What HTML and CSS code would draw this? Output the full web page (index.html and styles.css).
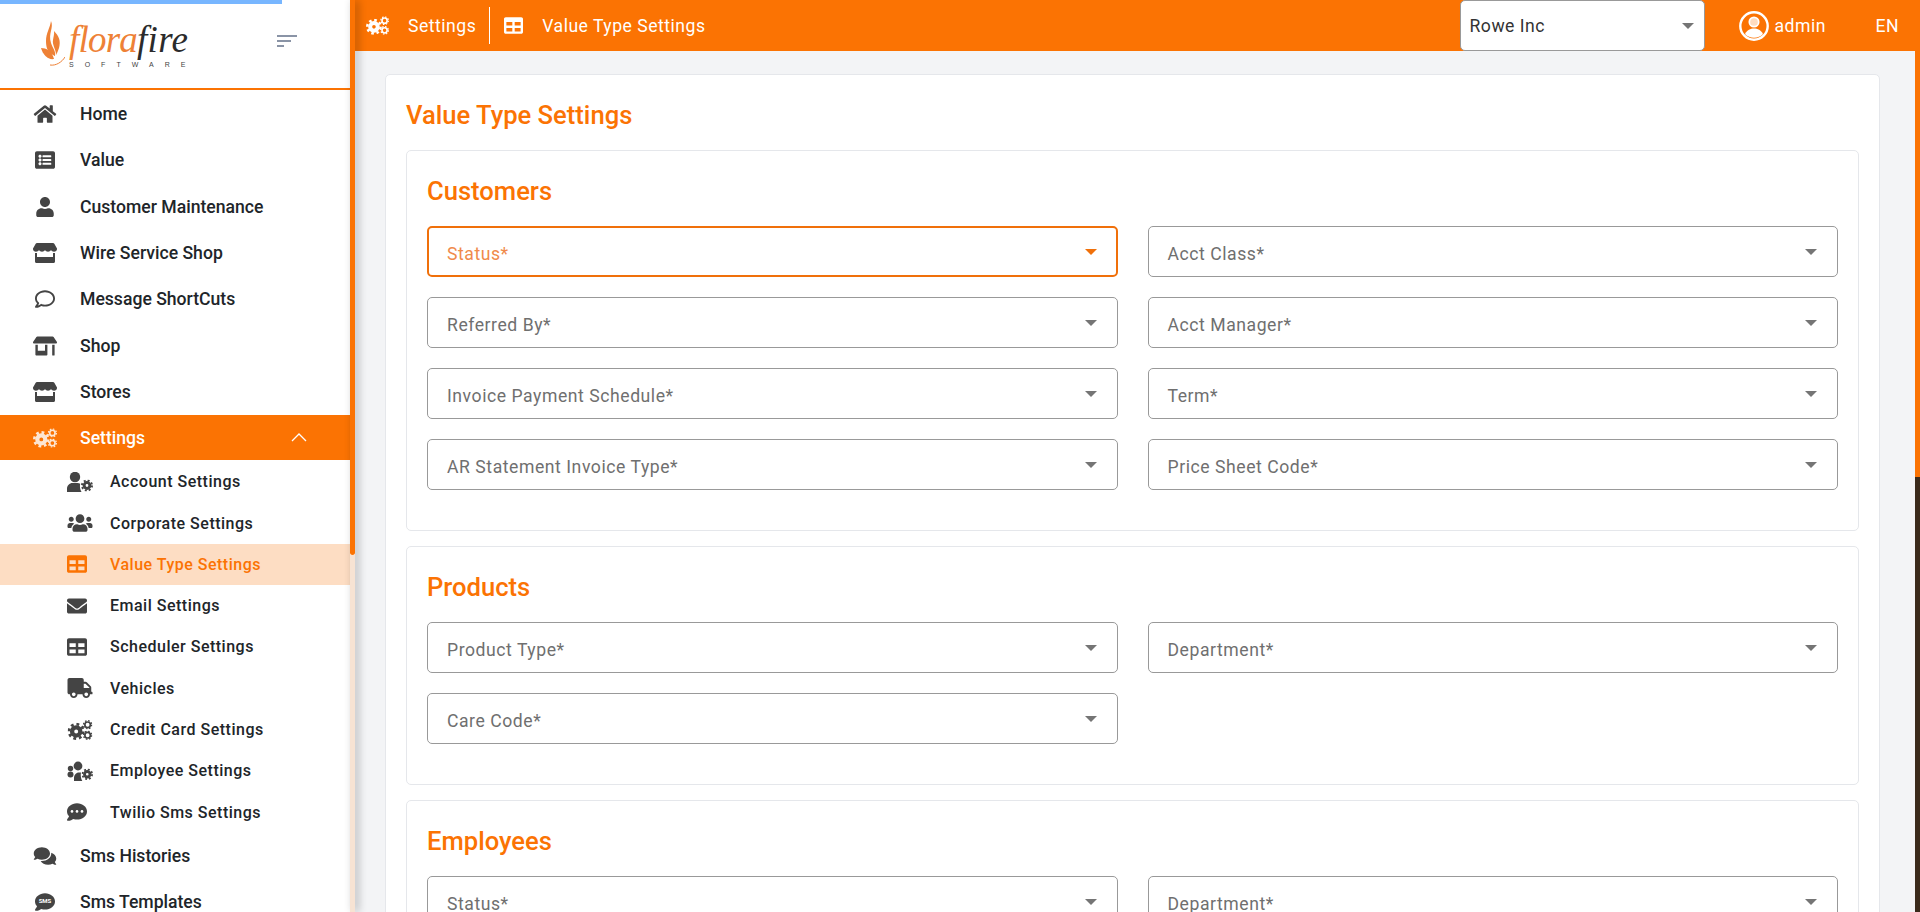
FILE: index.html
```html
<!DOCTYPE html>
<html lang="en">
<head>
    <meta charset="UTF-8">
    <title>Value Type Settings</title>
    <link rel="stylesheet" href="styles.css">
</head>
<body>
    <svg class="defs" width="0" height="0">
        <symbol id="gear" viewBox="0 0 20 20">
            <circle cx="10" cy="10" r="4.800" fill="none" stroke="currentColor" stroke-width="5"/>
            <circle cx="10" cy="10" r="8.400" fill="none" stroke="currentColor" stroke-width="3.200" stroke-dasharray="3.300 3.300"/>
        </symbol>
        <symbol id="gear-small" viewBox="0 0 20 20">
            <circle cx="10" cy="10" r="5.800" fill="none" stroke="currentColor" stroke-width="3.600"/>
            <circle cx="10" cy="10" r="8.600" fill="none" stroke="currentColor" stroke-width="2.800" stroke-dasharray="3.380 3.380"/>
        </symbol>
        <symbol id="i-cogs" viewBox="0 0 26 21">
            <use href="#gear" x="0" y="3" width="18" height="18"/>
            <use href="#gear-small" x="16" y="0" width="10" height="10"/>
            <use href="#gear-small" x="16" y="11" width="10" height="10"/>
        </symbol>
        <symbol id="i-home" viewBox="0 0 576 512">
            <path fill="currentColor" d="M280.37 148.26L96 300.11V464a16 16 0 0 0 16 16l112.06-.29a16 16 0 0 0 15.92-16V368a16 16 0 0 1 16-16h64a16 16 0 0 1 16 16v95.64a16 16 0 0 0 16 16.05L464 480a16 16 0 0 0 16-16V300L295.67 148.26a12.19 12.19 0 0 0-15.3 0zM571.6 251.47L488 182.56V44.05a12 12 0 0 0-12-12h-56a12 12 0 0 0-12 12v72.61L318.47 43a48 48 0 0 0-61 0L4.34 251.47a12 12 0 0 0-1.6 16.9l25.5 31A12 12 0 0 0 45.15 301l235.22-193.74a12.19 12.19 0 0 1 15.3 0L530.9 301a12 12 0 0 0 16.9-1.6l25.5-31a12 12 0 0 0-1.7-16.93z"/>
        </symbol>
        <symbol id="i-list" viewBox="0 0 512 512">
            <path fill="currentColor" d="M464 480H48c-26.51 0-48-21.49-48-48V80c0-26.51 21.49-48 48-48h416c26.51 0 48 21.49 48 48v352c0 26.51-21.49 48-48 48zM128 120c-22.091 0-40 17.909-40 40s17.909 40 40 40 40-17.909 40-40-17.909-40-40-40zm0 96c-22.091 0-40 17.909-40 40s17.909 40 40 40 40-17.909 40-40-17.909-40-40-40zm0 96c-22.091 0-40 17.909-40 40s17.909 40 40 40 40-17.909 40-40-17.909-40-40-40zm288-136v-32c0-6.627-5.373-12-12-12H204c-6.627 0-12 5.373-12 12v32c0 6.627 5.373 12 12 12h200c6.627 0 12-5.373 12-12zm0 96v-32c0-6.627-5.373-12-12-12H204c-6.627 0-12 5.373-12 12v32c0 6.627 5.373 12 12 12h200c6.627 0 12-5.373 12-12zm0 96v-32c0-6.627-5.373-12-12-12H204c-6.627 0-12 5.373-12 12v32c0 6.627 5.373 12 12 12h200c6.627 0 12-5.373 12-12z"/>
        </symbol>
        <symbol id="i-user" viewBox="0 0 448 512">
            <path fill="currentColor" d="M224 256c70.7 0 128-57.3 128-128S294.7 0 224 0 96 57.3 96 128s57.3 128 128 128zm89.6 32h-16.7c-22.2 10.2-46.9 16-72.9 16s-50.6-5.8-72.9-16h-16.7C60.2 288 0 348.2 0 422.4V464c0 26.5 21.5 48 48 48h352c26.5 0 48-21.5 48-48v-41.6c0-74.2-60.2-134.4-134.4-134.4z"/>
        </symbol>
        <symbol id="i-store" viewBox="0 0 24 20">
            <path fill="currentColor" d="M4 0h16c.6 0 1 .3 1.300.8L24 5.400c.2 1.800-1 3.300-3 3.300-1.300 0-2.400-.6-3-1.600-.6 1-1.700 1.600-3 1.600s-2.400-.6-3-1.600c-.6 1-1.700 1.600-3 1.600s-2.400-.6-3-1.600c-.6 1-1.700 1.600-3 1.600-2 0-3.200-1.500-3-3.300L2.700.8C3 .3 3.400 0 4 0z"/>
            <path fill="currentColor" d="M2 10h2v4h16v-4h2v8.500c0 .8-.6 1.500-1.500 1.500h-17C2.600 20 2 19.300 2 18.500z"/>
        </symbol>
        <symbol id="i-shop" viewBox="0 0 640 512">
            <path fill="currentColor" d="M320 384H128V224H64v256c0 17.700 14.300 32 32 32h256c17.700 0 32-14.300 32-32V224h-64v160zm314.600-241.800l-85.300-128c-6-8.900-16-14.200-26.700-14.200H117.400c-10.700 0-20.700 5.300-26.600 14.200l-85.300 128c-14.200 21.300 1 49.800 26.600 49.800H608c25.500 0 40.700-28.500 26.600-49.800zM512 496c0 8.800 7.200 16 16 16h32c8.800 0 16-7.200 16-16V224h-64v272z"/>
        </symbol>
        <symbol id="i-comment" viewBox="0 0 512 512">
            <path fill="currentColor" d="M256 32C114.600 32 0 125.100 0 240c0 47.600 19.900 91.200 52.900 126.300C38 405.700 7 439.100 6.500 439.500c-6.600 7-8.400 17.200-4.600 26S14.400 480 24 480c61.500 0 110-25.700 139.100-46.300C192 442.800 223.200 448 256 448c141.400 0 256-93.100 256-208S397.400 32 256 32zm0 368c-26.700 0-53.100-4.100-78.400-12.100l-22.700-7.200-19.500 13.800c-14.300 10.100-33.900 21.400-57.500 29 7.300-12.100 14.400-25.700 19.900-40.200l10.600-28.100-20.600-21.800C69.700 314.100 48 282.200 48 240c0-88.200 93.300-160 208-160s208 71.800 208 160-93.300 160-208 160z"/>
        </symbol>
        <symbol id="i-bubble" viewBox="0 0 512 512">
            <path fill="currentColor" d="M256 32C114.600 32 0 125.100 0 240c0 47.600 19.900 91.200 52.900 126.300C38 405.700 7 439.100 6.500 439.500c-6.600 7-8.400 17.200-4.600 26S14.400 480 24 480c61.500 0 110-25.700 139.100-46.300C192 442.800 223.200 448 256 448c141.400 0 256-93.100 256-208S397.400 32 256 32z"/>
        </symbol>
        <symbol id="i-comments" viewBox="0 0 576 512">
            <path fill="currentColor" d="M416 192c0-88.400-93.100-160-208-160S0 103.600 0 192c0 34.300 14.100 65.900 38 92-13.400 30.200-35.500 54.200-35.800 54.500-2.200 2.300-2.800 5.700-1.500 8.700S4.800 352 8 352c36.600 0 66.900-12.300 88.700-25 32.200 15.700 70.300 25 111.300 25 114.900 0 208-71.600 208-160zm122 220c23.900-26 38-57.700 38-92 0-66.900-53.500-124.200-129.300-148.100.9 6.600 1.300 13.300 1.300 20.100 0 105.900-107.700 192-240 192-10.800 0-21.300-.8-31.700-1.900C207.800 439.600 281.800 480 368 480c41 0 79.100-9.200 111.300-25 21.800 12.700 52.100 25 88.700 25 3.200 0 6.100-1.900 7.300-4.800 1.300-2.900.7-6.300-1.500-8.700-.3-.3-22.400-24.200-35.800-54.500z"/>
        </symbol>
        <symbol id="i-users" viewBox="0 0 640 512">
            <path fill="currentColor" d="M96 224c35.300 0 64-28.700 64-64s-28.700-64-64-64-64 28.700-64 64 28.700 64 64 64zm448 0c35.300 0 64-28.700 64-64s-28.700-64-64-64-64 28.700-64 64 28.700 64 64 64zm32 32h-64c-17.600 0-33.500 7.100-45.100 18.600 40.300 22.100 68.900 62 75.100 109.400h66c17.700 0 32-14.300 32-32v-32c0-35.300-28.700-64-64-64zm-256 0c61.900 0 112-50.100 112-112S381.900 32 320 32 208 82.100 208 144s50.100 112 112 112zm76.800 32h-8.300c-20.800 10-43.900 16-68.500 16s-47.600-6-68.500-16h-8.300C179.600 288 128 339.600 128 403.200V432c0 26.500 21.500 48 48 48h288c26.500 0 48-21.500 48-48v-28.800c0-63.600-51.600-115.200-115.200-115.200zm-223.700-13.400C161.500 263.100 145.600 256 128 256H64c-35.300 0-64 28.700-64 64v32c0 17.700 14.300 32 32 32h65.900c6.300-47.400 34.900-87.300 75.200-109.400z"/>
        </symbol>
        <symbol id="i-table" viewBox="0 0 512 512" preserveAspectRatio="xMinYMid">
            <path fill="currentColor" d="M464 32H48C21.490 32 0 53.490 0 80v352c0 26.510 21.490 48 48 48h416c26.510 0 48-21.490 48-48V80c0-26.510-21.490-48-48-48zM224 416H64v-96h160v96zm0-160H64v-96h160v96zm224 160H288v-96h160v96zm0-160H288v-96h160v96z"/>
        </symbol>
        <symbol id="i-envelope" viewBox="0 0 512 512" preserveAspectRatio="xMinYMid">
            <path fill="currentColor" d="M502.300 190.800c3.900-3.100 9.700-.2 9.700 4.700V400c0 26.500-21.500 48-48 48H48c-26.500 0-48-21.500-48-48V195.600c0-5 5.700-7.800 9.700-4.700 22.400 17.400 52.100 39.500 154.100 113.600 21.100 15.400 56.700 47.800 92.200 47.600 35.700.3 72-32.800 92.300-47.600 102-74.100 131.600-96.300 154-113.700zM256 320c23.200.4 56.600-29.200 73.400-41.400 132.700-96.300 142.800-104.700 173.400-128.700 5.800-4.500 9.200-11.500 9.200-18.900v-19c0-26.500-21.500-48-48-48H48C21.500 64 0 85.500 0 112v19c0 7.400 3.400 14.300 9.200 18.900 30.600 23.900 40.700 32.400 173.400 128.700 16.800 12.200 50.200 41.800 73.400 41.400z"/>
        </symbol>
        <symbol id="i-truck" viewBox="0 0 640 512">
            <path fill="currentColor" d="M624 352h-16V243.900c0-12.700-5.100-24.900-14.100-33.900L494 110.100c-9-9-21.200-14.100-33.900-14.100H416V48c0-26.500-21.500-48-48-48H48C21.500 0 0 21.500 0 48v320c0 26.500 21.500 48 48 48h16c0 53 43 96 96 96s96-43 96-96h128c0 53 43 96 96 96s96-43 96-96h48c8.800 0 16-7.200 16-16v-32c0-8.800-7.200-16-16-16zM160 464c-26.500 0-48-21.500-48-48s21.500-48 48-48 48 21.500 48 48-21.500 48-48 48zm320 0c-26.500 0-48-21.500-48-48s21.500-48 48-48 48 21.500 48 48-21.500 48-48 48zm80-208H416V144h44.100l99.900 99.900V256z"/>
        </symbol>
        <symbol id="i-user-cog" viewBox="0 0 26 20">
            <circle cx="8" cy="5" r="5.200" fill="currentColor"/>
            <path fill="currentColor" d="M0 20v-3.500C0 13.500 2.500 11 5.500 11h5c1 0 2 .3 2.700.8-.6 2.300-.2 6 1.300 8.200z"/>
            <use href="#gear" x="14" y="7.500" width="12" height="12"/>
        </symbol>
        <symbol id="i-users-cog" viewBox="0 0 26 20">
            <circle cx="3.500" cy="7.500" r="2.700" fill="currentColor"/>
            <circle cx="3.500" cy="13.500" r="3" fill="currentColor"/>
            <circle cx="11" cy="5" r="4.400" fill="currentColor"/>
            <path fill="currentColor" d="M7 20v-3c0-3 2-5.500 5-5.500h2c-.6 2.600-.2 6 1.300 8.500z"/>
            <use href="#gear" x="14.500" y="7.500" width="11.500" height="11.500"/>
        </symbol>
        <symbol id="i-dots" viewBox="0 0 512 512" preserveAspectRatio="xMinYMid">
            <use href="#i-bubble" width="512" height="512"/>
            <circle cx="128" cy="240" r="34" fill="#fff"/>
            <circle cx="256" cy="240" r="34" fill="#fff"/>
            <circle cx="384" cy="240" r="34" fill="#fff"/>
        </symbol>
    </svg>

    <div class="progress"></div>

    <div class="app">
        <aside class="sidebar">
            <div class="brand">
                <div class="logo">
                    <svg class="flame" viewBox="0 0 24 46">
                        <path fill="#ee8136" d="M10 0c3 7-3 12 0 22 1.500 5 5 8 4 13-3-2-9-3-9-15C5 12 9 7 10 0z"/>
                        <path fill="#ee8136" d="M13 10c5 5 7 10 5 17-1 3-2 5-3 7 0-6-4-10-3-15 .4-3 1.500-6 1-9z"/>
                        <path fill="#ee8136" d="M0 27c5 0 11 3 13 11-6 1-11-4-13-11z"/>
                        <path fill="none" stroke="#ee8136" stroke-width="1" d="M9 44c6 1 12-3 15-8"/>
                    </svg>
                    <div class="wordmark">
                        <div class="wordmark-name"><span class="flora">flora</span><span class="fire">fire</span></div>
                        <div class="wordmark-sub">SOFTWARE</div>
                    </div>
                </div>
                <div class="menu-toggle"><span></span><span></span><span></span></div>
            </div>

            <nav class="nav">
                <a class="nav-item"><svg class="icon"><use href="#i-home"/></svg>Home</a>
                <a class="nav-item"><svg class="icon"><use href="#i-list"/></svg>Value</a>
                <a class="nav-item"><svg class="icon"><use href="#i-user"/></svg>Customer Maintenance</a>
                <a class="nav-item"><svg class="icon"><use href="#i-store"/></svg>Wire Service Shop</a>
                <a class="nav-item"><svg class="icon"><use href="#i-comment"/></svg>Message ShortCuts</a>
                <a class="nav-item"><svg class="icon"><use href="#i-shop"/></svg>Shop</a>
                <a class="nav-item"><svg class="icon"><use href="#i-store"/></svg>Stores</a>
                <a class="nav-item open"><svg class="icon"><use href="#i-cogs"/></svg>Settings
                    <svg class="chevron" viewBox="0 0 16 9"><path d="M1 8l7-7 7 7" fill="none" stroke="#fff" stroke-width="1.300"/></svg>
                </a>
                <div class="subnav">
                    <a class="sub-item"><svg class="icon"><use href="#i-user-cog"/></svg>Account Settings</a>
                    <a class="sub-item"><svg class="icon"><use href="#i-users"/></svg>Corporate Settings</a>
                    <a class="sub-item active"><svg class="icon"><use href="#i-table"/></svg>Value Type Settings</a>
                    <a class="sub-item"><svg class="icon"><use href="#i-envelope"/></svg>Email Settings</a>
                    <a class="sub-item"><svg class="icon"><use href="#i-table"/></svg>Scheduler Settings</a>
                    <a class="sub-item"><svg class="icon"><use href="#i-truck"/></svg>Vehicles</a>
                    <a class="sub-item"><svg class="icon"><use href="#i-cogs"/></svg>Credit Card Settings</a>
                    <a class="sub-item"><svg class="icon"><use href="#i-users-cog"/></svg>Employee Settings</a>
                    <a class="sub-item"><svg class="icon"><use href="#i-dots"/></svg>Twilio Sms Settings</a>
                </div>
                <a class="nav-item"><svg class="icon"><use href="#i-comments"/></svg>Sms Histories</a>
                <a class="nav-item"><span class="sms-icon"><svg class="icon"><use href="#i-bubble"/></svg><span class="sms-label">SMS</span></span>Sms Templates</a>
            </nav>
        </aside>
        <div class="scroll-side"><div class="scroll-thumb"></div><div class="scroll-track"></div></div>

        <div class="main">
            <header class="topbar">
                <svg class="top-icon"><use href="#i-cogs"/></svg>
                <span class="crumb">Settings</span>
                <span class="crumb-sep"></span>
                <svg class="top-icon top-table"><use href="#i-table"/></svg>
                <span class="crumb">Value Type Settings</span>
                <div class="company">Rowe Inc<span class="arrow"></span></div>
                <svg class="avatar" viewBox="0 0 30 30">
                    <circle cx="15" cy="15" r="13.700" fill="none" stroke="#fff" stroke-width="2.400"/>
                    <circle cx="15" cy="11" r="4.700" fill="#ffdcc0" stroke="#fff" stroke-width="1.700"/>
                    <path d="M6 23c2-4 5.500-5.500 9-5.500s7 1.500 9 5.500c-2.300 2.500-5.500 3.800-9 3.800s-6.700-1.300-9-3.800z" fill="#fff"/>
                </svg>
                <span class="user">admin</span>
                <span class="lang">EN</span>
            </header>

            <main class="content">
                <section class="card">
                    <h1 class="page-title">Value Type Settings</h1>

                    <div class="group">
                        <h2 class="group-title">Customers</h2>
                        <div class="fields">
                            <div class="field focused">Status*<span class="arrow"></span></div>
                            <div class="field">Acct Class*<span class="arrow"></span></div>
                            <div class="field">Referred By*<span class="arrow"></span></div>
                            <div class="field">Acct Manager*<span class="arrow"></span></div>
                            <div class="field">Invoice Payment Schedule*<span class="arrow"></span></div>
                            <div class="field">Term*<span class="arrow"></span></div>
                            <div class="field">AR Statement Invoice Type*<span class="arrow"></span></div>
                            <div class="field">Price Sheet Code*<span class="arrow"></span></div>
                        </div>
                    </div>

                    <div class="group">
                        <h2 class="group-title">Products</h2>
                        <div class="fields">
                            <div class="field">Product Type*<span class="arrow"></span></div>
                            <div class="field">Department*<span class="arrow"></span></div>
                            <div class="field">Care Code*<span class="arrow"></span></div>
                        </div>
                    </div>

                    <div class="group">
                        <h2 class="group-title">Employees</h2>
                        <div class="fields">
                            <div class="field">Status*<span class="arrow"></span></div>
                            <div class="field">Department*<span class="arrow"></span></div>
                        </div>
                    </div>
                </section>
            </main>
        </div>
        <div class="scroll-page"><div class="page-thumb"></div><div class="page-track"></div></div>
    </div>
</body>
</html>
```

FILE: styles.css
```css
html, body{
    margin: 0;
    height: 100%;
    overflow: hidden;
}
body{
    font-family: Roboto, "Liberation Sans", sans-serif;
    color: #212529;
    background: #fff;
}
.defs{
    position: absolute;
}
.progress{
    position: absolute;
    top: 0;
    left: 0;
    width: 282px;
    height: 4px;
    background: #77b6ff;
    z-index: 5;
}
.app{
    display: flex;
    height: 912px;
}

/* sidebar */
.sidebar{
    width: 350px;
    flex: none;
    overflow: hidden;
    background: #fff;
}
.brand{
    height: 88px;
    border-bottom: 2px solid #fb7303;
    display: flex;
    align-items: flex-start;
    justify-content: space-between;
    padding-left: 41px;
    padding-right: 53px;
}
.logo{
    display: flex;
    margin-top: 21px;
}
.flame{
    width: 24px;
    height: 46px;
    flex: none;
}
.wordmark{
    margin-left: 2px;
}
.wordmark-name{
    font-family: "Liberation Serif", serif;
    font-style: italic;
    font-size: 37px;
    line-height: 38px;
    letter-spacing: -0.800px;
    padding-left: 2px;
}
.flora{
    color: #ee8136;
}
.fire{
    color: #2b2b2b;
    letter-spacing: 0.300px;
}
.wordmark-sub{
    font-family: "Liberation Sans", sans-serif;
    font-size: 7px;
    line-height: 7px;
    letter-spacing: 11px;
    color: #444;
    margin: 2px 0 0 2px;
}
.menu-toggle{
    margin-top: 35px;
    width: 20px;
    display: flex;
    flex-direction: column;
    gap: 3px;
}
.menu-toggle span{
    display: block;
    height: 2px;
    background: #8a94a6;
}
.menu-toggle span:nth-child(1){
    width: 20px;
}
.menu-toggle span:nth-child(2){
    width: 14px;
}
.menu-toggle span:nth-child(3){
    width: 7px;
}
.nav{
    padding-top: 1px;
}
.nav-item, .sub-item{
    display: flex;
    align-items: center;
    font-weight: 500;
}
.nav-item{
    height: 46.300px;
    padding-left: 33px;
    font-size: 17.600px;
}
.nav-item .icon, .sms-icon{
    width: 24px;
    height: 20px;
    margin-right: 23px;
    color: #444;
    flex: none;
    position: relative;
}
.sms-icon .icon{
    display: block;
    margin: 0;
}
.sms-label{
    position: absolute;
    left: 0;
    top: 5px;
    width: 24px;
    text-align: center;
    font-size: 6px;
    line-height: 8px;
    font-weight: 700;
    color: #fff;
}
.nav-item.open{
    height: 45px;
    background: #fb7303;
    color: #fff;
    position: relative;
}
.nav-item.open .icon{
    color: #fde6d2;
}
.chevron{
    position: absolute;
    left: 291px;
    top: 18px;
    width: 16px;
    height: 9px;
}
.subnav{
    display: flex;
    flex-direction: column;
    padding-top: 1px;
}
.sub-item{
    height: 41.300px;
    padding-left: 67px;
    font-size: 16px;
    letter-spacing: 0.500px;
}
.sub-item .icon{
    width: 26px;
    height: 20px;
    margin-right: 17px;
    color: #444;
    flex: none;
}
.sub-item.active{
    background: #fdddc3;
    color: #fb7303;
}
.sub-item.active .icon{
    color: #fb7303;
}

/* scrollbars */
.scroll-side{
    width: 5px;
    flex: none;
    display: flex;
    flex-direction: column;
    box-shadow: 3px 0 8px rgba(0,0,0,0.3);
    z-index: 2;
}
.scroll-thumb{
    height: 555px;
    background: #fb7303;
    border-radius: 0 0 3px 3px;
}
.scroll-track{
    flex: 1;
    background: #f7e3d3;
}
.scroll-page{
    width: 5px;
    flex: none;
    display: flex;
    flex-direction: column;
}
.page-thumb{
    height: 477px;
    background: #fb7303;
}
.page-track{
    flex: 1;
    background: #3a2a1b;
}

/* top bar */
.main{
    flex: 1;
    min-width: 0;
    display: flex;
    flex-direction: column;
    background: #f3f4f6;
}
.topbar{
    height: 51px;
    flex: none;
    background: #fb7303;
    color: #fff;
    display: flex;
    align-items: center;
    padding-left: 11px;
    font-size: 17.600px;
    letter-spacing: 0.500px;
}
.top-icon{
    width: 23px;
    height: 19px;
    flex: none;
}
.top-table{
    width: 19px;
}
.crumb{
    margin-left: 19px;
}
.crumb-sep{
    width: 1px;
    height: 37px;
    background: #fff;
    margin: 0 14px 0 13px;
}
.company{
    margin-left: auto;
    width: 245px;
    height: 51px;
    box-sizing: border-box;
    background: #fff;
    border: 1px solid #999;
    border-radius: 5px;
    color: #333;
    display: flex;
    align-items: center;
    justify-content: space-between;
    padding: 0 10px 0 9px;
}
.arrow{
    width: 0;
    height: 0;
    border-left: 6.500px solid transparent;
    border-right: 6.500px solid transparent;
    border-top: 6.500px solid #757575;
    flex: none;
}
.avatar{
    width: 30px;
    height: 30px;
    margin-left: 34px;
}
.user{
    margin-left: 6px;
}
.lang{
    margin-left: 49.500px;
    margin-right: 16px;
}

/* content */
.content{
    flex: 1;
    overflow: hidden;
    padding: 23px 35px 0 30px;
}
.card{
    background: #fff;
    border: 1px solid #e5e7eb;
    border-radius: 5px;
    padding: 20px;
}
.page-title{
    margin: 1px 0 16px;
    font-size: 25.600px;
    line-height: 38px;
    font-weight: 500;
    color: #fb7303;
}
.group{
    border: 1px solid #e5e7eb;
    border-radius: 5px;
    padding: 20px;
    margin-bottom: 15px;
}
.group-title{
    margin: 0 0 15px;
    font-size: 25.600px;
    line-height: 40px;
    font-weight: 500;
    color: #fb7303;
}
.fields{
    display: grid;
    grid-template-columns: 1fr 1fr;
    column-gap: 30px;
    row-gap: 20px;
    padding-bottom: 20px;
}
.field{
    height: 51px;
    box-sizing: border-box;
    border: 1px solid #999;
    border-radius: 5px;
    padding: 5px 20px 0 19px;
    display: flex;
    align-items: center;
    justify-content: space-between;
    font-size: 17.600px;
    letter-spacing: 0.550px;
    color: #6f6f6f;
}
.field .arrow{
    margin-top: -5px;
}
.field.focused{
    border: 2px solid #f0700a;
    color: #f08a4b;
    padding-left: 18px;
    padding-right: 19px;
}
.field.focused .arrow{
    border-top-color: #f0700a;
}
```
